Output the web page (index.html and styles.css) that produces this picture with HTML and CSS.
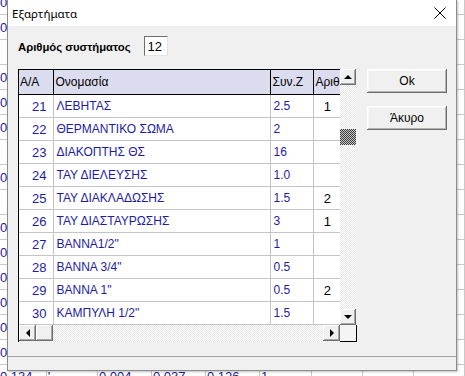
FILE: index.html
```html
<!DOCTYPE html>
<html lang="el">
<head>
    <meta charset="UTF-8">
    <title>Εξαρτήματα</title>
    <link rel="stylesheet" href="styles.css">
</head>
<body>
    <!-- application sheet behind the dialog -->
    <table class="sheet">
        <tr><td>0.118</td><td></td><td>0.002</td><td>0.010</td><td>0.088</td><td>1</td><td></td><td></td><td></td></tr>
        <tr><td>0.120</td><td></td><td>0.002</td><td>0.011</td><td>0.090</td><td>1</td><td></td><td></td><td></td></tr>
        <tr><td></td><td></td><td></td><td></td><td></td><td></td><td></td><td></td><td></td></tr>
        <tr><td>0.108</td><td></td><td>0.003</td><td>0.020</td><td>0.104</td><td>1</td><td></td><td></td><td></td></tr>
        <tr><td>0.108</td><td></td><td>0.003</td><td>0.020</td><td>0.104</td><td>1</td><td></td><td></td><td></td></tr>
        <tr><td>0.100</td><td></td><td>0.003</td><td>0.020</td><td>0.104</td><td>1</td><td></td><td></td><td></td></tr>
        <tr><td></td><td></td><td></td><td></td><td></td><td></td><td></td><td></td><td></td></tr>
        <tr><td>0.112</td><td></td><td>0.004</td><td>0.031</td><td>0.118</td><td>1</td><td></td><td></td><td></td></tr>
        <tr><td></td><td></td><td></td><td></td><td></td><td></td><td></td><td></td><td></td></tr>
        <tr><td>0.125</td><td></td><td>0.004</td><td>0.033</td><td>0.120</td><td>1</td><td></td><td></td><td></td></tr>
        <tr><td>0.125</td><td></td><td>0.004</td><td>0.033</td><td>0.120</td><td>1</td><td></td><td></td><td></td></tr>
        <tr><td>0.130</td><td></td><td>0.004</td><td>0.035</td><td>0.122</td><td>1</td><td></td><td></td><td></td></tr>
        <tr><td>0.130</td><td></td><td>0.004</td><td>0.035</td><td>0.122</td><td>1</td><td></td><td></td><td></td></tr>
        <tr><td>0.132</td><td></td><td>0.004</td><td>0.036</td><td>0.124</td><td>1</td><td></td><td></td><td></td></tr>
        <tr><td>0.132</td><td></td><td>0.004</td><td>0.036</td><td>0.124</td><td>1</td><td></td><td></td><td></td></tr>
        <tr class="last"><td>0.134</td><td>'</td><td>0.004</td><td>0.037</td><td>0.126</td><td>1</td><td></td><td></td><td></td></tr>
    </table>

    <div class="dialog">
        <div class="titlebar">
            <span class="title">Εξαρτήματα</span>
            <svg class="close" width="12" height="12" viewBox="0 0 12 12">
                <path d="M0.5 0.5 L11.5 11.5 M11.5 0.5 L0.5 11.5" stroke="#000" stroke-width="1" fill="none"/>
            </svg>
        </div>

        <div class="content">
            <div class="sysrow">
                <label class="syslabel">Αριθμός συστήματος</label>
                <div class="sysinput">12</div>
            </div>

            <div class="main">
                <div class="grid">
                    <div class="cells">
                        <table class="parts">
                            <colgroup>
                                <col class="c-aa"><col class="c-name"><col class="c-z"><col class="c-num">
                            </colgroup>
                            <tr class="head">
                                <th>A/A</th><th>Ονομασία</th><th>Συν.Ζ</th><th>Αριθμός</th>
                            </tr>
                            <tr><td class="aa">21</td><td>ΛΕΒΗΤΑΣ</td><td>2.5</td><td class="num">1</td></tr>
                            <tr><td class="aa">22</td><td>ΘΕΡΜΑΝΤΙΚΟ ΣΩΜΑ</td><td>2</td><td class="num"></td></tr>
                            <tr><td class="aa">23</td><td>ΔΙΑΚΟΠΤΗΣ ΘΣ</td><td>16</td><td class="num"></td></tr>
                            <tr><td class="aa">24</td><td>ΤΑΥ ΔΙΕΛΕΥΣΗΣ</td><td>1.0</td><td class="num"></td></tr>
                            <tr><td class="aa">25</td><td>ΤΑΥ ΔΙΑΚΛΑΔΩΣΗΣ</td><td>1.5</td><td class="num">2</td></tr>
                            <tr><td class="aa">26</td><td>ΤΑΥ ΔΙΑΣΤΑΥΡΩΣΗΣ</td><td>3</td><td class="num">1</td></tr>
                            <tr><td class="aa">27</td><td>BANNA1/2"</td><td>1</td><td class="num"></td></tr>
                            <tr><td class="aa">28</td><td>BANNA 3/4"</td><td>0.5</td><td class="num"></td></tr>
                            <tr><td class="aa">29</td><td>BANNA 1"</td><td>0.5</td><td class="num">2</td></tr>
                            <tr><td class="aa">30</td><td>ΚΑΜΠΥΛΗ 1/2"</td><td>1.5</td><td class="num"></td></tr>
                        </table>
                    </div>

                    <div class="vscroll">
                        <div class="arrow"><span class="tri up"></span></div>
                        <div class="vtrack"><div class="vthumb"></div></div>
                        <div class="arrow"><span class="tri down"></span></div>
                    </div>

                    <div class="hscroll">
                        <div class="arrow"><span class="tri left"></span></div>
                        <div class="arrow hthumb"></div>
                        <div class="htrack"></div>
                        <div class="arrow"><span class="tri right"></span></div>
                    </div>

                    <div class="corner"></div>
                </div>

                <div class="buttons">
                    <button class="btn">Ok</button>
                    <button class="btn">Άκυρο</button>
                </div>
            </div>

            <div class="statusbar"></div>
        </div>
    </div>
</body>
</html>
```

FILE: styles.css
```css
body {
    margin: 0;
    width: 465px;
    height: 376px;
    overflow: hidden;
    position: relative;
    background-color: #fff;
    font-family: "Liberation Sans", Arial, sans-serif;
}

/* background sheet */
.sheet {
    border-collapse: collapse;
    table-layout: fixed;
    margin-top: -10px;
    font-size: 13px;
    color: #1a1a9c;
}

.sheet td {
    height: 24px;
    padding: 0 0 0 1px;
    border-bottom: 1px solid #c8c8c8;
    border-right: 1px solid #c8c8c8;
    width: 54px;
    white-space: nowrap;
    overflow: hidden;
}

.sheet td:first-child {
    width: 47px;
    padding-left: 0;
}

.sheet .last td {
    vertical-align: top;
    padding-top: 4px;
    height: 20px;
}

/* dialog window */
.dialog {
    position: absolute;
    left: 7px;
    top: 0;
    width: 448px;
    height: 370px;
    border: 1px solid #8c8c8c;
    border-top: none;
    box-shadow: 1px 1px 2px rgba(0, 0, 0, 0.25);
    display: flex;
    flex-direction: column;
}

.titlebar {
    height: 26px;
    background-color: #fff;
    display: flex;
    align-items: center;
    justify-content: space-between;
    padding: 0 10px 0 4px;
}

.title {
    font-family: "Noto Sans", sans-serif;
    font-size: 11.5px;
    color: #000;
}

.close {
    display: block;
}

.content {
    flex: 1;
    background-color: #f0f0f0;
    display: flex;
    flex-direction: column;
}

.sysrow {
    display: flex;
    align-items: center;
    gap: 13px;
    margin: 10px 0 0 10px;
    height: 20px;
}

.syslabel {
    font-size: 11.3px;
    font-weight: bold;
    color: #000;
    padding-top: 1px;
}

.sysinput {
    width: 19px;
    height: 18px;
    background-color: #fff;
    border-top: 1px solid #6d6d6d;
    border-left: 1px solid #6d6d6d;
    border-right: 1px solid #e3e3e3;
    border-bottom: 1px solid #e3e3e3;
    font-size: 13px;
    line-height: 20px;
    padding-left: 3px;
}

.main {
    display: flex;
    gap: 10px;
    margin: 13px 0 0 10px;
}

/* parts grid */
.grid {
    display: grid;
    grid-template-columns: 321px 17px;
    grid-template-rows: 255px 17px;
    border-top: 1px solid #000;
    border-left: 1px solid #000;
}

.cells {
    overflow: hidden;
    background-color: #fff;
}

.parts {
    border-collapse: collapse;
    table-layout: fixed;
    width: 321px;
    font-size: 12px;
}

.c-aa { width: 34px; }
.c-name { width: 217px; }
.c-z { width: 43px; }
.c-num { width: 27px; }

.parts th {
    height: 24px;
    padding: 0 0 0 2px;
    background-color: #dcdcef;
    border-right: 1px solid #000;
    border-bottom: 1px solid #000;
    font-weight: normal;
    text-align: left;
    white-space: nowrap;
    overflow: hidden;
    color: #000;
}

.parts th:first-child {
    padding-left: 1px;
}

.parts th:last-child {
    border-right: none;
}

.parts td {
    height: 22px;
    padding: 0 0 0 3px;
    border-right: 1px solid #c4c4c4;
    border-bottom: 1px solid #c4c4c4;
    color: #1c1ca4;
    white-space: nowrap;
    overflow: hidden;
    font-size: 12px;
}

.parts td.aa {
    text-align: right;
    padding: 0 6px 0 0;
    font-size: 13px;
}

.parts td.num {
    text-align: right;
    padding: 0 9px 0 0;
    color: #000;
    border-right: none;
    font-size: 13px;
}

/* scrollbars */
.vscroll {
    display: flex;
    flex-direction: column;
    background: repeating-conic-gradient(#fff 0 25%, #e6e6e6 0 50%) 0 0 / 2px 2px;
    margin-top: -1px;
}

.vtrack {
    flex: 1;
}

.vthumb {
    width: 16px;
    height: 16px;
    margin-top: 44px;
    background: repeating-conic-gradient(#3c3c3c 0 25%, #c8c8c8 0 50%) 0 0 / 2px 2px;
}

.hscroll {
    display: flex;
    background: repeating-conic-gradient(#fff 0 25%, #e6e6e6 0 50%) 0 0 / 2px 2px;
}

.htrack {
    flex: 1;
}

.arrow {
    width: 16px;
    height: 16px;
    flex: none;
    background-color: #f0f0f0;
    box-shadow: inset -1px -1px #6d6d6d, inset 1px 1px #fff, inset -2px -2px #a8a8a8;
    display: flex;
    align-items: center;
    justify-content: center;
}

.hscroll .arrow {
    width: 17px;
}

.tri {
    width: 0;
    height: 0;
    border-style: solid;
    border-color: transparent;
}

.tri.up {
    border-width: 0 4px 4px 4px;
    border-bottom-color: #000;
}

.tri.down {
    border-width: 4px 4px 0 4px;
    border-top-color: #000;
}

.tri.left {
    border-width: 4px 4px 4px 0;
    border-right-color: #000;
}

.tri.right {
    border-width: 4px 0 4px 4px;
    border-left-color: #000;
}

.corner {
    background-color: #f4f4f4;
    border-right: 1px solid #000;
    border-bottom: 1px solid #000;
    box-sizing: border-box;
}

/* buttons */
.buttons {
    display: flex;
    flex-direction: column;
    gap: 13px;
}

.btn {
    width: 80px;
    height: 24px;
    background-color: #f0f0f0;
    border: none;
    box-shadow: inset -1px -1px #6d6d6d, inset 1px 1px #fff, inset -2px -2px #b4b4b4, inset 2px 2px #f8f8f8;
    font-family: "Liberation Sans", Arial, sans-serif;
    font-size: 12px;
    color: #000;
    padding: 0;
}

.statusbar {
    margin-top: auto;
    height: 13px;
    border-top: 1px solid #a0a0a0;
}
```
